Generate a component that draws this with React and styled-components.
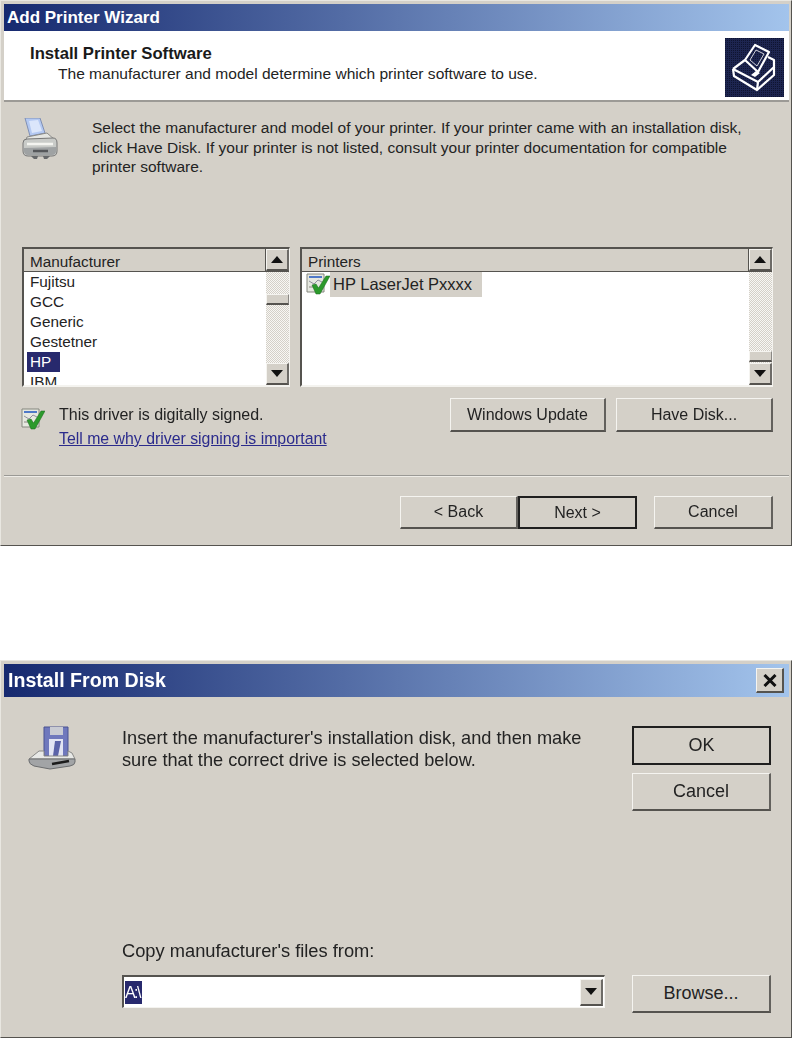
import styled, { createGlobalStyle } from "styled-components";

const GlobalStyle = createGlobalStyle`
  html, body {
    margin: 0;
    padding: 0;
    background: #fff;
  }
  body {
    font-family: "Liberation Sans", Arial, sans-serif;
    font-size: 15px;
    color: #232323;
  }
`;

const MANUFACTURERS = ["Fujitsu", "GCC", "Generic", "Gestetner", "HP", "IBM"];

const PrinterIcon = () => (
  <svg width="36" height="42" viewBox="0 0 36 42">
    <path d="M3 0 L18 0 L23 15 L8 18 Z" fill="#b4c9f2" stroke="#7f8fb4" />
    <path d="M7 3 L16 2 L20 13 L10 15 Z" fill="#dbe6fb" />
    <path d="M5 19 L25 15 L33 22 L3 24 Z" fill="#e4e5e2" stroke="#8b8b88" />
    <path d="M1 25 Q1 21 5 21 L31 20 Q35 20 35 25 L35 33 Q35 38 30 38 L6 38 Q1 38 1 33 Z" fill="#c9cbc8" stroke="#777" />
    <path d="M2 30 L34 29 L34 33 Q34 37 30 37 L6 37 Q2 37 2 33 Z" fill="#9fa2a3" />
    <path d="M5 26 H31" stroke="#f4f4f0" strokeWidth="2.5" />
    <path d="M9 38 L12 41 H15 L16 38 M21 38 L22 41 H25 L28 38" fill="#66686a" />
    <path d="M11 33 H26" stroke="#55575a" strokeWidth="2.5" />
  </svg>
);

const WizardIcon = () => (
  <svg width="59" height="59" viewBox="0 0 59 59">
    <defs>
      <pattern id="wizardGrid" width="2" height="2" patternUnits="userSpaceOnUse">
        <rect width="2" height="2" fill="#1d2550" />
        <rect width="1" height="1" fill="#0f1430" />
      </pattern>
    </defs>
    <rect width="59" height="59" fill="url(#wizardGrid)" />
    <g fill="none" stroke="#fff" strokeWidth="2.2" strokeLinejoin="round">
      <path d="M8 31 L33 44 L49 29 L49 22 L43 19" />
      <path d="M8 31 L9 38 L32 52 L49 37 L49 29" />
      <path d="M33 44 L32 52" />
      <path d="M8 31 L20 22" />
      <path d="M20 22 L30 7 L44 14 L33 34 Z" />
      <path d="M25 22 L31 12 L39 16 L32 28 Z" strokeWidth="0.8" />
    </g>
    <path d="M26 37 L31 33 L35 35 L30 39 Z" fill="#fff" />
  </svg>
);

const SignedIcon = () => (
  <svg width="24" height="22" viewBox="0 0 24 22">
    <path d="M1 1 H18 V19 H1 Z" fill="#e6e8e0" stroke="#85877f" />
    <path d="M3 4 H16" stroke="#4f79c8" strokeWidth="2" />
    <path d="M3 8 L8 11 L12 7 L16 9" stroke="#8f8f9c" fill="none" />
    <path d="M3 14 H9" stroke="#b7b7b0" strokeWidth="2" />
    <path d="M6 12 L10 21 L14 21 L24 3 L20 3 L12.5 15 L10 11 Z" fill="#2c9a2c" stroke="#19661d" strokeWidth="0.5" />
  </svg>
);

const DiskIcon = () => (
  <svg width="48" height="44" viewBox="0 0 48 44">
    <path d="M16 1 L40 1 L40 30 L16 30 Z" fill="#6f78bd" stroke="#4b5291" />
    <path d="M22 1 H35 V9 H22 Z" fill="#c9cbd3" />
    <path d="M21 13 H35 V30 H21 Z" fill="#e2e4f3" />
    <path d="M27 15 H33 L30 30 H25 Z" fill="#5a62a8" />
    <path d="M1 33 L11 25 L16 25 L16 30 L40 30 L40 25 L44 27 L47 33 Z" fill="#e8e9e7" stroke="#8a8a88" />
    <path d="M1 33 H47 V36 Q47 39 42 40 L22 43 L6 40 Q1 38 1 35 Z" fill="#a2a4a6" stroke="#6b6d6f" />
    <path d="M24 38 L41 35" stroke="#1c1c1c" strokeWidth="2.5" />
  </svg>
);

const ArrowIcon = ({ $down }) => (
  <svg width="12" height="7" viewBox="0 0 12 7">
    <path d={$down ? "M0 0 H12 L6 7 Z" : "M0 7 H12 L6 0 Z"} fill="#111" />
  </svg>
);

const App = () => (
  <>
    <GlobalStyle />
    <Page>
      <WizardWindow>
        <TitleBar>Add Printer Wizard</TitleBar>
        <WizardHeader>
          <HeaderText>
            <HeaderTitle>Install Printer Software</HeaderTitle>
            <HeaderSubtitle>The manufacturer and model determine which printer software to use.</HeaderSubtitle>
          </HeaderText>
          <WizardIcon />
        </WizardHeader>
        <Intro>
          <PrinterIcon />
          <IntroText>
            Select the manufacturer and model of your printer. If your printer came with an installation disk,
            <br />
            click Have Disk. If your printer is not listed, consult your printer documentation for compatible
            <br />
            printer software.
          </IntroText>
        </Intro>
        <Lists>
          <ListBox $width={268}>
            <ListHead>
              <ListLabel>Manufacturer</ListLabel>
              <ScrollButton><ArrowIcon /></ScrollButton>
            </ListHead>
            <ListContent>
              <Rows>
                {MANUFACTURERS.map((name) => (
                  <Row key={name}>
                    <RowText $selected={name === "HP"}>{name}</RowText>
                  </Row>
                ))}
              </Rows>
              <ScrollTrack>
                <Thumb $top={22} />
                <ScrollButton $height={22}><ArrowIcon $down /></ScrollButton>
              </ScrollTrack>
            </ListContent>
          </ListBox>
          <ListBox $width={473}>
            <ListHead>
              <ListLabel>Printers</ListLabel>
              <ScrollButton><ArrowIcon /></ScrollButton>
            </ListHead>
            <ListContent>
              <PrinterRows>
                <PrinterItem>
                  <SignedIcon />
                  <PrinterName>HP LaserJet Pxxxx</PrinterName>
                </PrinterItem>
              </PrinterRows>
              <ScrollTrack>
                <Thumb $top={79} />
                <ScrollButton $height={22}><ArrowIcon $down /></ScrollButton>
              </ScrollTrack>
            </ListContent>
          </ListBox>
        </Lists>
        <SignedRow>
          <SignedInfo>
            <SignedIcon />
            <SignedText>
              <span>This driver is digitally signed.</span>
              <DriverLink href="#">Tell me why driver signing is important</DriverLink>
            </SignedText>
          </SignedInfo>
          <Button $width={156} $height={34}>Windows Update</Button>
          <Button $width={157} $height={34}>Have Disk...</Button>
        </SignedRow>
        <Footer>
          <Button $width={118} $height={33}>&lt; Back</Button>
          <Button $width={119} $height={33} $default>Next &gt;</Button>
          <Button $width={119} $height={33} $gap={17}>Cancel</Button>
        </Footer>
      </WizardWindow>

      <DiskWindow>
        <TitleBar $tall>
          Install From Disk
          <CloseButton>
            <svg width="14" height="13" viewBox="0 0 14 13">
              <path d="M1.5 1 L12.5 12 M12.5 1 L1.5 12" stroke="#111" strokeWidth="3" />
            </svg>
          </CloseButton>
        </TitleBar>
        <DiskTop>
          <DiskIcon />
          <DiskMessage>
            Insert the manufacturer's installation disk, and then make
            <br />
            sure that the correct drive is selected below.
          </DiskMessage>
          <ButtonColumn>
            <Button $width={139} $height={39} $default>OK</Button>
            <Button $width={139} $height={38}>Cancel</Button>
          </ButtonColumn>
        </DiskTop>
        <DiskBottom>
          <CopyField>
            <CopyLabel>Copy manufacturer's files from:</CopyLabel>
            <Combo>
              <ComboValue>A:\</ComboValue>
              <ScrollButton $height={27}><ArrowIcon $down /></ScrollButton>
            </Combo>
          </CopyField>
          <Button $width={139} $height={38}>Browse...</Button>
        </DiskBottom>
      </DiskWindow>
    </Page>
  </>
);

export default App;

const Page = styled.div`
  width: 793px;
  height: 1038px;
  overflow: hidden;
  display: flex;
  flex-direction: column;
  gap: 114px;
  filter: blur(0.35px);
`;

const Dialog = styled.div`
  box-sizing: border-box;
  width: 792px;
  background: #d4d0c8;
  border-style: solid;
  border-width: 1px;
  border-color: #e9e7e1 #55534f #55534f #e9e7e1;
  padding: 3px 2px 0 3px;
  display: flex;
  flex-direction: column;
`;

const WizardWindow = styled(Dialog)`
  height: 546px;
  font-size: 16px;
`;

const DiskWindow = styled(Dialog)`
  height: 378px;
  font-size: 18px;
`;

const TitleBar = styled.div`
  flex: none;
  height: ${(p) => (p.$tall ? 33 : 27)}px;
  display: flex;
  align-items: center;
  justify-content: space-between;
  padding: 0 5px 0 ${(p) => (p.$tall ? 4 : 3)}px;
  background: linear-gradient(90deg, #16296f 0%, #a3c4ec 100%);
  color: #fff;
  font-size: ${(p) => (p.$tall ? 19.6 : 17)}px;
  font-weight: bold;
`;

const CloseButton = styled.div`
  width: 28px;
  height: 25px;
  box-sizing: border-box;
  display: flex;
  align-items: center;
  justify-content: center;
  background: #d4d0c8;
  border-style: solid;
  border-width: 1px 2px 2px 1px;
  border-color: #f5f4f0 #55534f #55534f #f5f4f0;
`;

const WizardHeader = styled.div`
  flex: none;
  height: 71px;
  box-sizing: border-box;
  background: #fff;
  border-bottom: 2px solid #9c9a96;
  display: flex;
  align-items: flex-start;
  justify-content: space-between;
  padding: 7px 5px 0 26px;
`;

const HeaderText = styled.div`
  display: flex;
  flex-direction: column;
  gap: 1px;
  margin-top: 6px;
`;

const HeaderTitle = styled.div`
  font-size: 16.7px;
  font-weight: bold;
  color: #1a1a1a;
`;

const HeaderSubtitle = styled.div`
  font-size: 15.55px;
  padding-left: 28px;
`;

const Intro = styled.div`
  flex: none;
  height: 145px;
  box-sizing: border-box;
  padding: 16px 0 0 18px;
  display: flex;
  gap: 34px;
`;

const IntroText = styled.div`
  line-height: 19.5px;
  font-size: 15.5px;
`;

const Lists = styled.div`
  flex: none;
  padding-left: 18px;
  display: flex;
  gap: 10px;
`;

const Sunken = styled.div`
  box-sizing: border-box;
  border-style: solid;
  border-width: 2px 1px 2px 2px;
  border-color: #55534f #f4f3ef #f4f3ef #55534f;
`;

const ListBox = styled(Sunken)`
  width: ${(p) => p.$width}px;
  height: 140px;
  display: flex;
  flex-direction: column;
  overflow: hidden;
  font-size: 15.3px;
`;

const ListHead = styled.div`
  flex: none;
  height: 23px;
  box-sizing: border-box;
  display: flex;
  border-bottom: 1px solid #55534f;
  background: #d4d0c8;
`;

const ListLabel = styled.div`
  flex: 1;
  padding: 2px 0 0 6px;
  line-height: 22px;
  border-right: 1px solid #55534f;
`;

const ScrollButton = styled.div`
  flex: none;
  width: 23px;
  height: ${(p) => p.$height || 22}px;
  box-sizing: border-box;
  display: flex;
  align-items: center;
  justify-content: center;
  background: #d4d0c8;
  border-style: solid;
  border-width: 1px 2px 2px 1px;
  border-color: #f5f4f0 #6d6b67 #55534f #f5f4f0;
`;

const ListContent = styled.div`
  flex: 1;
  min-height: 0;
  display: flex;
`;

const Rows = styled.div`
  flex: 1;
  background: #fff;
  overflow: hidden;
  padding-left: 3px;
`;

const Row = styled.div`
  height: 20px;
  line-height: 20px;
`;

const RowText = styled.span`
  display: inline-block;
  padding: 0 5px 0 3px;
  min-width: ${(p) => (p.$selected ? 25 : 0)}px;
  background: ${(p) => (p.$selected ? "#27296d" : "transparent")};
  color: ${(p) => (p.$selected ? "#fff" : "inherit")};
`;

const ScrollTrack = styled.div`
  flex: none;
  width: 23px;
  position: relative;
  display: flex;
  flex-direction: column;
  justify-content: flex-end;
  background: repeating-conic-gradient(#f8f7f4 0 25%, #d4d0c8 0 50%) 0 0 / 2px 2px;
`;

const Thumb = styled.div`
  position: absolute;
  left: 0;
  right: 0;
  top: ${(p) => p.$top}px;
  height: 11px;
  box-sizing: border-box;
  background: #d4d0c8;
  border-style: solid;
  border-width: 1px 1px 2px 1px;
  border-color: #f5f4f0 #8a8884 #55534f #f5f4f0;
`;

const PrinterRows = styled.div`
  flex: 1;
  background: #fff;
`;

const PrinterItem = styled.div`
  display: flex;
  align-items: flex-start;
  padding-left: 4px;
  svg {
    margin-top: 1px;
  }
`;

const PrinterName = styled.div`
  width: 152px;
  box-sizing: border-box;
  height: 25px;
  line-height: 24px;
  padding-left: 3px;
  font-size: 16.5px;
  background: #d4d0c8;
`;

const SignedRow = styled.div`
  flex: none;
  height: 90px;
  box-sizing: border-box;
  padding: 11px 16px 0 17px;
  display: flex;
  align-items: flex-start;
  gap: 10px;
  border-bottom: 2px groove #eeece7;
`;

const SignedInfo = styled.div`
  flex: 1;
  display: flex;
  gap: 14px;
  padding-top: 10px;
`;

const SignedText = styled.div`
  display: flex;
  flex-direction: column;
  gap: 6px;
  margin-top: -2px;
`;

const DriverLink = styled.a`
  color: #2b2b8c;
  text-decoration: underline;
  font-size: 15.85px;
`;

const Button = styled.div`
  flex: none;
  box-sizing: border-box;
  width: ${(p) => p.$width}px;
  height: ${(p) => p.$height}px;
  margin-left: ${(p) => p.$gap || 0}px;
  display: flex;
  align-items: center;
  justify-content: center;
  background: #d4d0c8;
  border-style: solid;
  border-width: ${(p) => (p.$default ? "2px" : "1px 2px 2px 1px")};
  border-color: ${(p) => (p.$default ? "#1f1f1f" : "#f5f4f0 #63615d #55534f #f5f4f0")};
`;

const Footer = styled.div`
  flex: none;
  padding: 19px 16px 0 0;
  display: flex;
  justify-content: flex-end;
`;

const DiskTop = styled.div`
  padding: 29px 18px 0 24px;
  display: flex;
  align-items: flex-start;
`;

const DiskMessage = styled.div`
  flex: 1;
  margin-left: 46px;
  padding-top: 1px;
  line-height: 22px;
  font-size: 18.2px;
`;

const ButtonColumn = styled.div`
  display: flex;
  flex-direction: column;
  gap: 8px;
`;

const DiskBottom = styled.div`
  margin-top: auto;
  padding: 0 18px 24px 118px;
  display: flex;
  align-items: flex-end;
  justify-content: space-between;
`;

const CopyField = styled.div`
  display: flex;
  flex-direction: column;
  gap: 14px;
  margin-bottom: 5px;
`;

const CopyLabel = styled.div`
  line-height: 20px;
  font-size: 18.3px;
`;

const Combo = styled(Sunken)`
  width: 483px;
  height: 33px;
  background: #fff;
  display: flex;
  align-items: center;
  justify-content: space-between;
  padding: 0 1px 0 0;
  border-width: 2px 1px 1px 2px;
`;

const ComboValue = styled.span`
  background: #27296d;
  color: #fff;
  height: 23px;
  line-height: 23px;
  font-size: 16px;
  letter-spacing: -1.6px;
  margin-left: 1px;
  padding-right: 2px;
`;
